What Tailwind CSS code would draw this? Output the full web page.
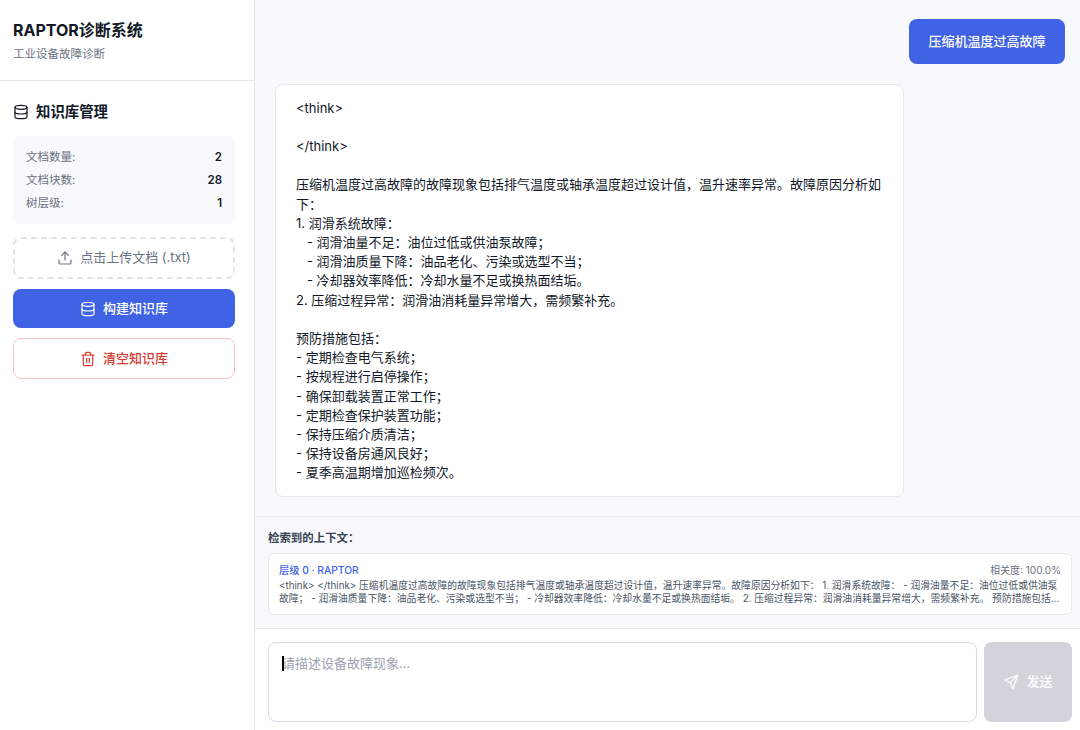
<!DOCTYPE html>
<html lang="zh-CN">
<head>
    <meta charset="UTF-8">
    <meta name="viewport" content="width=device-width, initial-scale=1.0">
    <script src="https://cdn.jsdelivr.net/npm/@tailwindcss/browser@4"></script>
    <title>RAPTOR诊断系统</title>
</head>
<body class="h-screen overflow-hidden bg-[#f8f9fc] font-['Inter','Noto_Sans_CJK_SC',sans-serif] text-[#111827]">
    <div class="flex h-[730px]">
        <!-- sidebar -->
        <aside class="w-[255px] shrink-0 bg-white border-r border-[#e5e7eb] flex flex-col">
            <div class="h-[81px] pl-[13px] pr-[20px] pt-[19px] border-b border-[#e5e7eb]">
                <h1 class="text-[16px] leading-[22px] font-bold text-[#111827]">RAPTOR诊断系统</h1>
                <p class="mt-[4px] text-[11.52px] leading-[18px] text-[#6b7280]">工业设备故障诊断</p>
            </div>
            <div class="pl-[13px] pr-[19px] pt-[21px]">
                <div class="flex items-center gap-[7px] h-[20px]">
                    <svg class="w-[16px] h-[16px]" viewBox="0 0 24 24" fill="none" stroke="currentColor" stroke-width="1.8" stroke-linecap="round" stroke-linejoin="round"><ellipse cx="12" cy="5" rx="9" ry="3"/><path d="M3 5V19A9 3 0 0 0 21 19V5"/><path d="M3 12A9 3 0 0 0 21 12"/></svg>
                    <h2 class="text-[14.4px] font-semibold">知识库管理</h2>
                </div>
                <div class="mt-[14px] h-[88px] bg-[#f8f9fc] rounded-lg px-[13px] py-[10px] flex flex-col justify-between text-[11.52px] leading-[22px]">
                    <div class="flex justify-between"><span class="text-[#6b7280]">文档数量:</span><span class="font-semibold">2</span></div>
                    <div class="flex justify-between"><span class="text-[#6b7280]">文档块数:</span><span class="font-semibold">28</span></div>
                    <div class="flex justify-between"><span class="text-[#6b7280]">树层级:</span><span class="font-semibold">1</span></div>
                </div>
                <div class="mt-[13px] flex flex-col gap-[10px]">
                    <button class="h-[42px] rounded-lg border-2 border-dashed border-[#e2e4ea] bg-white flex items-center justify-center gap-[7px] text-[13px] text-[#6b7280]">
                        <svg class="w-[16px] h-[16px]" viewBox="0 0 24 24" fill="none" stroke="currentColor" stroke-width="1.8" stroke-linecap="round" stroke-linejoin="round"><path d="M21 15v4a2 2 0 0 1-2 2H5a2 2 0 0 1-2-2v-4"/><polyline points="17 8 12 3 7 8"/><line x1="12" y1="3" x2="12" y2="15"/></svg>
                        点击上传文档 (.txt)
                    </button>
                    <button class="h-[39px] rounded-lg bg-[#3f63e4] flex items-center justify-center gap-[7px] text-[13px] font-medium text-white">
                        <svg class="w-[16px] h-[16px]" viewBox="0 0 24 24" fill="none" stroke="currentColor" stroke-width="1.8" stroke-linecap="round" stroke-linejoin="round"><ellipse cx="12" cy="5" rx="9" ry="3"/><path d="M3 5V19A9 3 0 0 0 21 19V5"/><path d="M3 12A9 3 0 0 0 21 12"/></svg>
                        构建知识库
                    </button>
                    <button class="h-[41px] rounded-lg border border-[#f8c4c4] bg-white flex items-center justify-center gap-[7px] text-[13px] font-medium text-[#d33a30]">
                        <svg class="w-[16px] h-[16px]" viewBox="0 0 24 24" fill="none" stroke="currentColor" stroke-width="1.8" stroke-linecap="round" stroke-linejoin="round"><path d="M3 6h18"/><path d="M19 6v14c0 1-1 2-2 2H7c-1 0-2-1-2-2V6"/><path d="M8 6V4c0-1 1-2 2-2h4c1 0 2 1 2 2v2"/><line x1="10" y1="11" x2="10" y2="17"/><line x1="14" y1="11" x2="14" y2="17"/></svg>
                        清空知识库
                    </button>
                </div>
            </div>
        </aside>

        <!-- main -->
        <main class="flex-1 min-w-0 flex flex-col">
            <div class="h-[516px] overflow-hidden pl-[20px] pr-[15px] pt-[19px]">
                <div class="flex justify-end">
                    <div class="h-[45px] w-[156px] rounded-lg bg-[#3f63e4] text-white text-[13px] font-medium flex items-center justify-center">压缩机温度过高故障</div>
                </div>
                <div class="mt-[20px] w-[629px] h-[413px] bg-white border border-[#e5e7eb] rounded-lg px-[20px] py-[13.6px] text-[13px] leading-[19.2px] whitespace-pre-wrap">&lt;think&gt;

&lt;/think&gt;

压缩机温度过高故障的故障现象包括排气温度或轴承温度超过设计值，温升速率异常。故障原因分析如下：
1. 润滑系统故障：
   - 润滑油量不足：油位过低或供油泵故障；
   - 润滑油质量下降：油品老化、污染或选型不当；
   - 冷却器效率降低：冷却水量不足或换热面结垢。
2. 压缩过程异常：润滑油消耗量异常增大，需频繁补充。

预防措施包括：
- 定期检查电气系统；
- 按规程进行启停操作；
- 确保卸载装置正常工作；
- 定期检查保护装置功能；
- 保持压缩介质清洁；
- 保持设备房通风良好；
- 夏季高温期增加巡检频次。</div>
            </div>

            <section class="h-[113px] border-t border-b border-[#e5e7eb] bg-[#f8f9fc] pl-[13px] pr-[8px] pt-[14px]">
                <h3 class="text-[11.44px] leading-[15px] font-semibold text-[#374151]">检索到的上下文：</h3>
                <div class="mt-[7px] h-[62px] bg-white border border-[#e5e7eb] rounded-md px-[10px] pt-[10px]">
                    <div class="flex justify-between leading-[13px]">
                        <span class="text-[10.24px] font-medium text-[#3f63e4]">层级 0 · RAPTOR</span>
                        <span class="text-[10px] text-[#6b7280]">相关度: 100.0%</span>
                    </div>
                    <p class="mt-[2px] text-[9.8px] leading-[13px] text-[#4b5563] line-clamp-2">&lt;think&gt; &lt;/think&gt; 压缩机温度过高故障的故障现象包括排气温度或轴承温度超过设计值，温升速率异常。故障原因分析如下： 1. 润滑系统故障： - 润滑油量不足：油位过低或供油泵故障； - 润滑油质量下降：油品老化、污染或选型不当； - 冷却器效率降低：冷却水量不足或换热面结垢。 2. 压缩过程异常：润滑油消耗量异常增大，需频繁补充。 预防措施包括...</p>
                </div>
            </section>

            <div class="flex-1 bg-white pl-[13px] pr-[8px] pt-[13px] flex gap-[7px]">
                <div class="relative flex-1 h-[80px] rounded-lg border border-[#d8dae5] px-[13px] py-[11px] text-[13px] leading-[19px] text-[#9ca3af]">
                    <span class="absolute left-[13px] top-[13px] w-[2px] h-[15px] bg-black"></span>
                    请描述设备故障现象...
                </div>
                <button class="w-[88px] h-[80px] rounded-lg bg-[#d1d5db] text-white text-[13px] font-medium flex items-center justify-center gap-[7px]">
                    <svg class="w-[16px] h-[16px]" viewBox="0 0 24 24" fill="none" stroke="currentColor" stroke-width="1.8" stroke-linecap="round" stroke-linejoin="round"><path d="m22 2-7 20-4-9-9-4Z"/><path d="M22 2 11 13"/></svg>
                    发送
                </button>
            </div>
        </main>
    </div>
</body>
</html>
